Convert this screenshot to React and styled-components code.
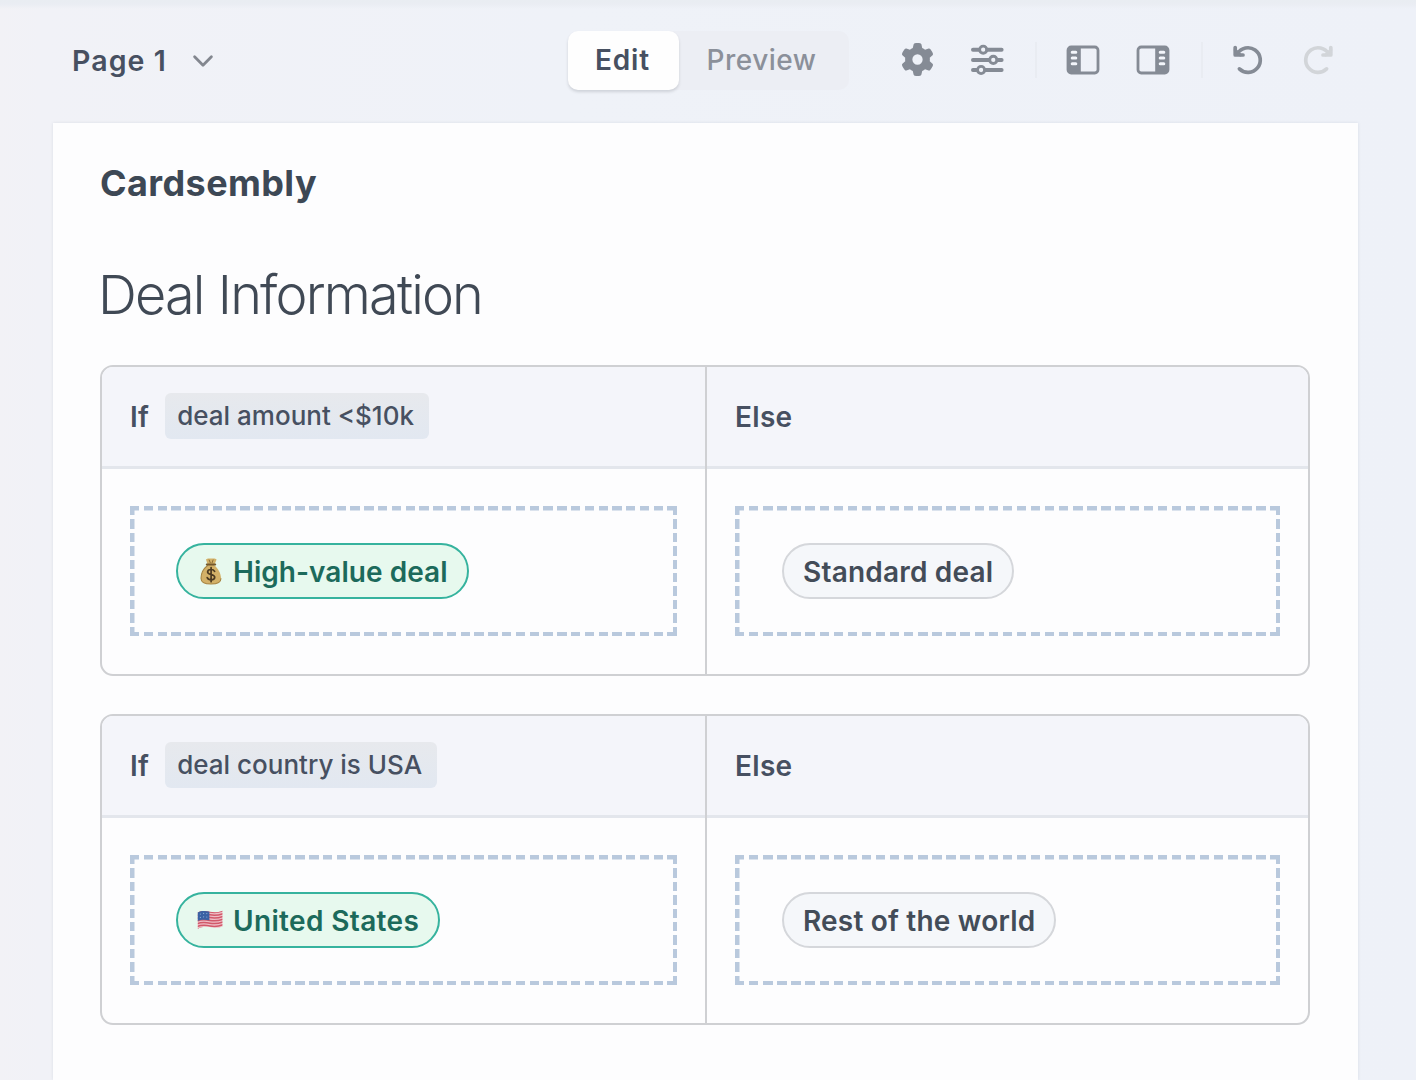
import React, { useState } from 'react'
import styled, { createGlobalStyle, css } from 'styled-components'
import { FaGear } from 'react-icons/fa6'

const blocks = [
  {
    id: 1,
    condition: 'deal amount <$10k',
    icon: 'money',
    match: 'High-value deal',
    tracking: 0.04,
    fallback: 'Standard deal',
  },
  {
    id: 2,
    condition: 'deal country is USA',
    icon: 'flag',
    match: 'United States',
    tracking: 0.35,
    fallback: 'Rest of the world',
  },
]

const ChevronIcon = () => (
  <svg width="22" height="14" viewBox="0 0 22 14" fill="none" stroke="#83878f" strokeWidth="2.8" strokeLinecap="round" strokeLinejoin="round">
    <path d="M2.6 2.8 11 11.2 19.4 2.8" />
  </svg>
)

const SlidersIcon = () => (
  <svg width="34" height="34" viewBox="0 0 34 34" fill="none" stroke="currentColor" strokeLinecap="round">
    <g strokeWidth="4">
      <path d="M3 6.7H8.4M17.4 6.7H31.6" />
      <path d="M3 16.9H18.6M27.6 16.9H31.6" />
      <path d="M3 27H6.4M15.4 27H31.6" />
    </g>
    <g strokeWidth="2.9">
      <circle cx="13.2" cy="6.7" r="3.6" />
      <circle cx="23.3" cy="16.9" r="3.6" />
      <circle cx="11.1" cy="27" r="3.6" />
    </g>
  </svg>
)

const PanelIcon = ({ flip }) => (
  <Mirror $flip={flip} width="34" height="30" viewBox="0 0 34 30">
    <rect x="2" y="2" width="30" height="26" rx="3.2" fill="none" stroke="currentColor" strokeWidth="2.8" />
    <path d="M3 3H14.8V27H3Z" fill="currentColor" />
    <path d="M6.2 7.2H9.8M6.2 13H9.8M6.2 18.8H9.8" stroke="#f4f6fb" strokeWidth="3" strokeLinecap="round" />
  </Mirror>
)

const TurnIcon = ({ flip }) => (
  <Mirror $flip={flip} width="34" height="34" viewBox="0 0 34 34" fill="none" stroke="currentColor" strokeWidth="3.7" strokeLinecap="round" strokeLinejoin="round">
    <path d="M8.4 25.9A12.3 12.3 0 1 0 6.4 10.8" />
    <path d="M4.2 4.6V12H12" />
    <path d="M4.2 7 9.4 12" strokeWidth="3" />
  </Mirror>
)

const MoneyIcon = () => (
  <svg width="26" height="28" viewBox="-1 0 26 28">
    <path d="M8 2.4C10 .9 11.4 2 13 1.4 14.8 2 16.4.8 18.6 2.4L16.2 8.2C20.2 11.4 23 16.4 23 21.2 23 25.2 20.6 27 13 27S3 25.2 3 21.2C3 16.4 5.8 11.4 9.8 8.2Z" fill="#d3b168" />
    <path d="M9.8 8.2C5.8 11.4 3 16.4 3 21.2 3 25.2 5.6 27 13 27S23 25.2 23 21.2" fill="none" stroke="#a88645" strokeWidth="1.1" />
    <path d="M8.8 7.6H17.2" stroke="#73582c" strokeWidth="2" strokeLinecap="round" />
    <path d="M11 2.6 12.4 6M15.2 2.6 14 6" stroke="#8b6c36" strokeWidth="1" />
    <path d="M16.6 14.4C15.8 12.9 14.5 12.5 13 12.5 11 12.5 9.6 13.5 9.6 15 9.6 18.4 16.7 16.6 16.7 20.2 16.7 21.8 15.2 22.8 13.1 22.8 11.3 22.8 9.9 22.1 9.2 20.6M13.1 10.6V24.7" fill="none" stroke="#4c3b22" strokeWidth="1.7" strokeLinecap="round" />
  </svg>
)

const FlagIcon = () => (
  <svg width="26" height="20" viewBox="0 0 26 20">
    <defs>
      <clipPath id="wave">
        <path d="M.8 2.4C5 .4 9 1 13 1.8S21 2.4 25.4.7V16.4C21 18.2 17 17.9 13 17.1S5 16.6.8 18.7Z" />
      </clipPath>
    </defs>
    <g clipPath="url(#wave)">
      <rect width="26" height="20" fill="#eebdc5" />
      <g fill="none" stroke="#d2596a" strokeWidth="1.5">
        {[2, 4.8, 7.6, 10.4, 13.2, 16, 18.6].map((y) => (
          <path key={y} d={`M0 ${y + 0.6}C5 ${y - 1.4} 9 ${y - 0.8} 13 ${y}S21 ${y + 0.6} 26 ${y - 1.2}`} />
        ))}
      </g>
      <path d="M0 0H12.4V10.2C8 9.4 4 9.4 0 11Z" fill="#3a62a4" />
      <g fill="#8fabd6">
        <circle cx="3.4" cy="4" r=".6" />
        <circle cx="6.6" cy="3.4" r=".6" />
        <circle cx="9.8" cy="3.6" r=".6" />
        <circle cx="3.4" cy="7.4" r=".6" />
        <circle cx="6.6" cy="6.8" r=".6" />
        <circle cx="9.8" cy="7" r=".6" />
      </g>
    </g>
  </svg>
)

const icons = { money: <MoneyIcon />, flag: <FlagIcon /> }

const ConditionBlock = ({ condition, icon, match, tracking, fallback }) => (
  <Block>
    <Column>
      <ColumnHeader>
        If <Condition>{condition}</Condition>
      </ColumnHeader>
      <ColumnBody>
        <DropZone $step={13.78}>
          <Pill $active $tracking={tracking}>
            <PillIcon>{icons[icon]}</PillIcon>
            <PillText>{match}</PillText>
          </Pill>
        </DropZone>
      </ColumnBody>
    </Column>
    <Column>
      <ColumnHeader>Else</ColumnHeader>
      <ColumnBody>
        <DropZone $step={14.09}>
          <Pill $tracking={0.2}>
            <PillText>{fallback}</PillText>
          </Pill>
        </DropZone>
      </ColumnBody>
    </Column>
  </Block>
)

const App = () => {
  const [mode, setMode] = useState('Edit')

  return (
    <>
      <GlobalStyle />
      <Editor>
        <Toolbar>
          <PageSelect>
            Page 1 <ChevronIcon />
          </PageSelect>
          <Segmented>
            {['Edit', 'Preview'].map((name) => (
              <Segment key={name} $active={mode === name} onClick={() => setMode(name)}>
                {name}
              </Segment>
            ))}
          </Segmented>
          <Tools>
            <Tool aria-label="settings"><FaGear size={33} /></Tool>
            <Tool aria-label="filters"><SlidersIcon /></Tool>
            <Divider />
            <Tool aria-label="left panel"><PanelIcon /></Tool>
            <Tool aria-label="right panel"><PanelIcon flip /></Tool>
            <Divider />
            <Tool aria-label="undo"><TurnIcon /></Tool>
            <Tool aria-label="redo" disabled><TurnIcon flip /></Tool>
          </Tools>
        </Toolbar>
        <Canvas>
          <Brand>Cardsembly</Brand>
          <Title>Deal Information</Title>
          <Blocks>
            {blocks.map((block) => (
              <ConditionBlock key={block.id} {...block} />
            ))}
          </Blocks>
        </Canvas>
      </Editor>
    </>
  )
}

const GlobalStyle = createGlobalStyle`
  * {
    box-sizing: border-box;
  }
  body {
    margin: 0;
    font-family: Inter, 'Liberation Sans', sans-serif;
    color: #475061;
  }
  button {
    padding: 0;
    border: none;
    background: transparent;
    font: inherit;
    color: inherit;
    cursor: pointer;
  }
  svg {
    display: block;
  }
`

const Mirror = styled.svg`
  transform: ${({ $flip }) => ($flip ? 'scaleX(-1)' : 'none')};
`

const Editor = styled.div`
  display: flex;
  flex-direction: column;
  width: 1416px;
  height: 1080px;
  overflow: hidden;
  background:
    linear-gradient(180deg, #e9edf2 0, #eaedf3 4px, transparent 9px),
    linear-gradient(90deg, #f2f2f6 0, #f1f2f7 40px, #eff2f8 560px, #eef1f8 100%);
`

const Toolbar = styled.header`
  display: flex;
  align-items: center;
  flex: 0 0 123px;
  padding: 0 0 2px 72px;
`

const PageSelect = styled.button`
  display: flex;
  align-items: center;
  gap: 25px;
  width: 496px;
  font-size: 28.5px;
  font-weight: 600;
  letter-spacing: 1.1px;
`

const Segmented = styled.div`
  display: flex;
  width: 281px;
  border-radius: 10px;
  background: #eceef4;
`

const Segment = styled.button`
  width: 111px;
  height: 59px;
  padding-bottom: 1px;
  font-size: 28px;
  font-weight: 500;
  letter-spacing: 0.5px;
  color: #8b909a;
  & + & {
    width: 165px;
  }
  ${({ $active }) =>
    $active &&
    css`
      padding-right: 2px;
      border-radius: 10px;
      background: #fefefe;
      box-shadow: 0 2px 3px rgba(60, 66, 80, 0.18);
      font-weight: 600;
      letter-spacing: 0.8px;
      color: #475061;
    `}
`

const Tools = styled.div`
  display: flex;
  align-items: center;
  margin: 0 0 2px 33px;
`

const Tool = styled.button`
  display: grid;
  place-items: center;
  width: 70px;
  height: 60px;
  color: #858b95;
  &:disabled {
    color: #d2d5d9;
    cursor: default;
  }
`

const Divider = styled.span`
  width: 2px;
  height: 36px;
  margin: 0 11px 0 13px;
  background: #e9ecf2;
  & ~ & {
    margin-right: 10px;
  }
`

const Canvas = styled.main`
  flex: 1;
  width: 1305px;
  margin-left: 53px;
  padding: 38px 48px 0 47px;
  background: #fdfdfe;
  box-shadow: 0 0 3px rgba(90, 100, 120, 0.14);
`

const Brand = styled.h2`
  margin: 0;
  font-size: 36px;
  line-height: 44px;
  font-weight: 700;
  letter-spacing: 0.4px;
  color: #3d4855;
`

const Title = styled.h1`
  margin: 57px 0 0 -2px;
  font-size: 54px;
  line-height: 66px;
  font-weight: 320;
  letter-spacing: -1.85px;
  word-spacing: 1px;
  color: #404955;
`

const Blocks = styled.div`
  display: grid;
  gap: 38px;
  margin-top: 37px;
`

const Block = styled.section`
  display: grid;
  grid-template-columns: 605px 1fr;
  height: 311px;
  border: 2px solid #cfd0d3;
  border-radius: 13px;
  overflow: hidden;
`

const ColumnHeader = styled.div`
  display: flex;
  align-items: center;
  gap: 16px;
  height: 102px;
  padding: 0 28px;
  border-bottom: 3px solid #e3e6ec;
  background: #f4f5fa;
  font-size: 28px;
  font-weight: 600;
  letter-spacing: 0.3px;
`

const Condition = styled.span`
  height: 46px;
  margin-top: -1px;
  padding: 0 15px 0 12px;
  border-radius: 6px;
  background: linear-gradient(180deg, #e7e9ed, #e2e8f1);
  font-size: 26px;
  line-height: 46px;
  font-weight: 500;
  letter-spacing: 0;
`

const ColumnBody = styled.div`
  flex: 1;
  padding: 37px 30px 37px 28px;
`

const Column = styled.div`
  display: flex;
  flex-direction: column;
  & + & {
    border-left: 2px solid #cfd0d3;
    margin-left: -2px;
  }
  & + & ${ColumnBody} {
    padding-right: 28px;
  }
`

const DropZone = styled.div`
  --step: ${({ $step }) => $step}px;
  --row: repeating-linear-gradient(90deg, #b9c9dd 0 9.4px, transparent 9.4px var(--step));
  --col: repeating-linear-gradient(180deg, #b9c9dd 0 9.4px, transparent 9.4px 13.4px);
  height: 130px;
  padding: 37px 46px;
  background:
    var(--row) 0 0 / 100% 4.5px no-repeat,
    var(--row) 0 100% / 100% 4.5px no-repeat,
    var(--col) 0 0 / 4.5px 100% no-repeat,
    var(--col) 100% 0 / 4.5px 100% no-repeat;
`

const Pill = styled.span`
  display: inline-flex;
  align-items: center;
  height: 56px;
  margin-left: 1px;
  padding: 0 19px;
  border: 2px solid #d5d7db;
  border-radius: 28px;
  background: #f5f7fa;
  font-size: 28px;
  font-weight: 600;
  letter-spacing: ${({ $tracking }) => $tracking}px;
  white-space: nowrap;
  color: #434c58;
  ${({ $active }) =>
    $active &&
    css`
      margin-left: 0;
      border-color: #36b39e;
      background: #e7f9ee;
      color: #1c6a5b;
    `}
`

const PillIcon = styled.span`
  display: grid;
  place-items: center;
  width: 26px;
  margin-right: 10px;
`

const PillText = styled.span`
  padding-top: 2px;
`

export default App
